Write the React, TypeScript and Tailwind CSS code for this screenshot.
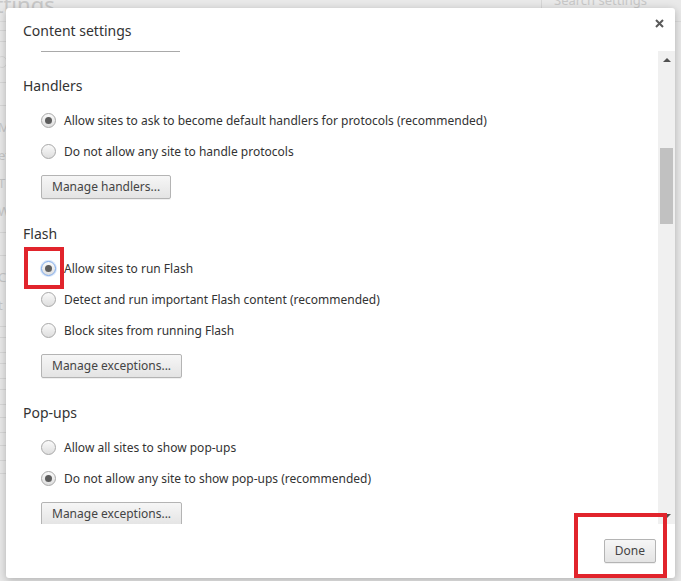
import type { ReactNode } from "react";

const font = "font-['Noto_Sans','Open_Sans',sans-serif]";

function Radio({ checked, focused }: { checked?: boolean; focused?: boolean }) {
  return (
    <span
      className={
        "flex h-[15px] w-[15px] shrink-0 items-center justify-center rounded-full border bg-gradient-to-b from-[#fafafa] to-[#dedede] " +
        (focused ? "border-[#7aa7e8] shadow-[0_0_0_1px_#d4e3fa]" : "border-[#a8a8a8]")
      }
    >
      {checked && <span className="h-[7px] w-[7px] rounded-full bg-[#5c5c5c]" />}
    </span>
  );
}

function Option({ label, checked, focused }: { label: string; checked?: boolean; focused?: boolean }) {
  return (
    <div className="flex h-[31px] items-center gap-[8px] pl-[35px]">
      <Radio checked={checked} focused={focused} />
      <span className="text-[12px] text-[#333]">{label}</span>
    </div>
  );
}

function Button({ children }: { children: ReactNode }) {
  return (
    <button
      type="button"
      className="flex h-[24px] items-center rounded-[2px] border border-[#b4b4b4] bg-gradient-to-b from-[#f6f6f6] to-[#e4e4e4] px-[10px] text-[12px] leading-none text-[#444] shadow-[0_1px_0_rgba(0,0,0,0.06)]"
    >
      {children}
    </button>
  );
}

function Section({ title, first, children }: { title: string; first?: boolean; children: ReactNode }) {
  return (
    <section className={first ? "mt-[24px]" : "mt-[25px]"}>
      <h3 className="pl-[17px] text-[14px] leading-[20px] text-[#333]">{title}</h3>
      <div className="mt-[9px]">{children}</div>
    </section>
  );
}

function Scrollbar() {
  return (
    <div className="flex w-[17px] shrink-0 flex-col items-center bg-[#f0f0f0]">
      <div className="flex h-[17px] items-center justify-center">
        <span className="h-0 w-0 border-x-[4px] border-b-[4px] border-x-transparent border-b-[#505050]" />
      </div>
      <div className="mt-[80px] h-[76px] w-[13px] bg-[#c1c1c1]" />
      <div className="flex-1" />
      <div className="flex h-[17px] items-center justify-center">
        <span className="h-0 w-0 border-x-[4px] border-t-[4px] border-x-transparent border-t-[#505050]" />
      </div>
    </div>
  );
}

function BackgroundPage() {
  return (
    <div className="flex h-full flex-col text-[#c8c8c8]">
      <div className="flex h-[22px] items-start border-b border-[#dcdcdc]">
        <span className="-mt-[9px] -ml-[29px] text-[22px] leading-[26px]">Settings</span>
        <div className="flex-1" />
        <div className="h-[22px] w-[140px] border-l border-[#d6d6d6] pl-[12px] text-[13px] leading-[12px]">
          <span className="-mt-[6px] block">Search settings</span>
        </div>
      </div>
      <div className="flex flex-col gap-[14px] pt-[8px] text-[13px] leading-[14px]">
        <span className="-ml-[3px] h-[12px] w-[10px] border border-[#d8d8d8]" />
        <span className="-ml-[3px] h-[12px] w-[10px] rounded-full border border-[#d8d8d8]" />
        <span className="-ml-[3px] h-[24px] w-[10px] border border-[#d8d8d8]" />
        <span className="-ml-[2px]">M</span>
        <span className="-ml-[2px]">ef</span>
        <span className="-ml-[2px]">T</span>
        <span className="-ml-[2px]">W</span>
        <span className="-ml-[3px] h-[24px] w-[10px] border border-[#d8d8d8]" />
        <span className="-ml-[2px]">C</span>
        <span className="-ml-[2px]">t</span>
        <span className="-ml-[3px] h-[12px] w-[10px] border border-[#d8d8d8]" />
        <span className="-ml-[3px] h-[12px] w-[10px] border border-[#d8d8d8]" />
        <span className="-ml-[3px] h-[12px] w-[10px] border border-[#d8d8d8]" />
        <span className="-ml-[3px] h-[14px] w-[10px] border border-[#d8d8d8]" />
        <span className="-ml-[3px] h-[14px] w-[10px] border border-[#d8d8d8]" />
        <span className="-ml-[3px] h-[14px] w-[10px] border border-[#d8d8d8]" />
      </div>
    </div>
  );
}

export default function App() {
  return (
    <div className={"relative h-[581px] w-[681px] overflow-hidden bg-[#e9e9e9] " + font}>
      <BackgroundPage />

      {/* dialog */}
      <div className="absolute left-[6px] top-[8px] flex h-[570px] w-[669px] flex-col rounded-[3px] bg-white shadow-[0_2px_8px_rgba(0,0,0,0.25)]">
        <div className="flex h-[43px] items-start justify-between">
          <h2 className="pl-[17px] pt-[13px] text-[14px] leading-[20px] text-[#333]">Content settings</h2>
          <button type="button" className="mr-[10px] mt-[10px] p-[1px] text-[#5a5a5a]" aria-label="Close">
            <svg width="9" height="9" viewBox="0 0 9 9">
              <path d="M1 1 L8 8 M8 1 L1 8" stroke="currentColor" strokeWidth="2" />
            </svg>
          </button>
        </div>

        <div className="flex h-[473px]">
          <div className="min-w-0 flex-1 overflow-hidden">
            <div className="ml-[35px] h-px w-[139px] bg-[#a9a9a9]" />

            <Section title="Handlers" first>
              <Option label="Allow sites to ask to become default handlers for protocols (recommended)" checked />
              <Option label="Do not allow any site to handle protocols" />
              <div className="mt-[8px] flex pl-[35px]">
                <Button>Manage handlers...</Button>
              </div>
            </Section>

            <Section title="Flash">
              <Option label="Allow sites to run Flash" checked focused />
              <Option label="Detect and run important Flash content (recommended)" />
              <Option label="Block sites from running Flash" />
              <div className="mt-[8px] flex pl-[35px]">
                <Button>Manage exceptions...</Button>
              </div>
            </Section>

            <Section title="Pop-ups">
              <Option label="Allow all sites to show pop-ups" />
              <Option label="Do not allow any site to show pop-ups (recommended)" checked />
              <div className="mt-[8px] flex pl-[35px]">
                <Button>Manage exceptions...</Button>
              </div>
            </Section>
          </div>
          <Scrollbar />
        </div>

        <div className="flex flex-1 items-start justify-end pr-[19px] pt-[15px]">
          <Button>Done</Button>
        </div>
      </div>

      {/* red annotation boxes */}
      <div className="pointer-events-none absolute left-[24px] top-[247px] h-[42px] w-[40px] border-[4px] border-[#e1242c]" />
      <div className="pointer-events-none absolute left-[574px] top-[513px] h-[65px] w-[93px] border-[4px] border-[#e1242c]" />
    </div>
  );
}
